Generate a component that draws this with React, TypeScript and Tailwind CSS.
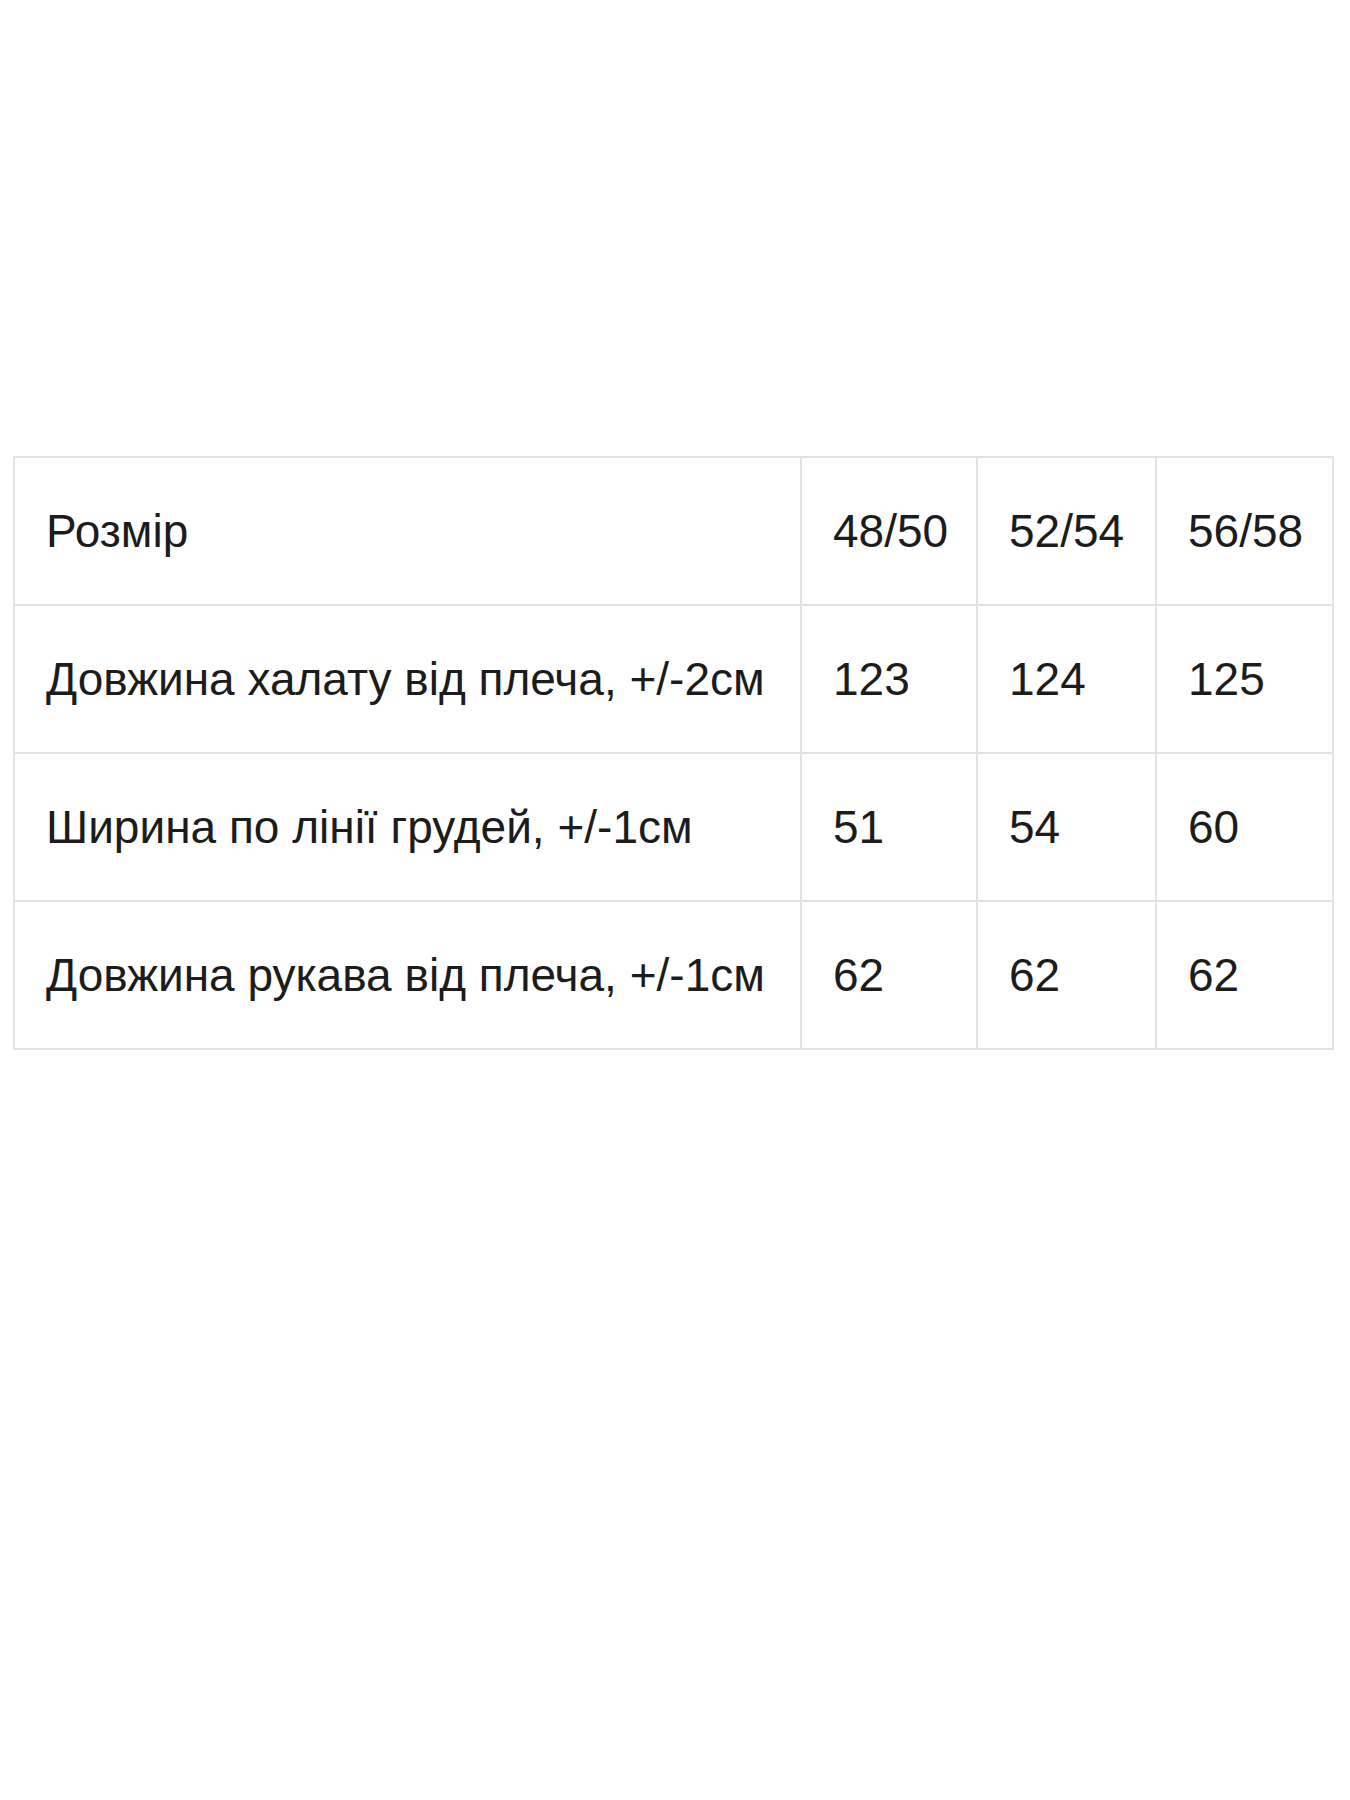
const sizes = ["48/50", "52/54", "56/58"];

const rows: [string, string[]][] = [
  ["Довжина халату від плеча, +/-2см", ["123", "124", "125"]],
  ["Ширина по лінії грудей, +/-1см", ["51", "54", "60"]],
  ["Довжина рукава від плеча, +/-1см", ["62", "62", "62"]],
];

const cell = "border-2 border-[#e3e3e3] h-[148px] pl-[31px] align-middle whitespace-nowrap";

export default function App() {
  return (
    <div className="w-[1350px] h-[1800px] bg-white pt-[456px] pl-[13px] text-[#1c1c1c] font-['Liberation_Sans',Arial,sans-serif] text-[46px]">
      <table className="table-fixed border-collapse w-[1319px]">
        <colgroup>
          <col className="w-[787px]" />
          <col className="w-[176px]" />
          <col className="w-[179px]" />
          <col className="w-[177px]" />
        </colgroup>
        <tbody>
          <tr>
            <td className={cell}>Розмір</td>
            {sizes.map((s) => (
              <td key={s} className={cell}>{s}</td>
            ))}
          </tr>
          {rows.map(([label, vals]) => (
            <tr key={label}>
              <td className={cell}>{label}</td>
              {vals.map((v, i) => (
                <td key={i} className={cell}>{v}</td>
              ))}
            </tr>
          ))}
        </tbody>
      </table>
    </div>
  );
}
